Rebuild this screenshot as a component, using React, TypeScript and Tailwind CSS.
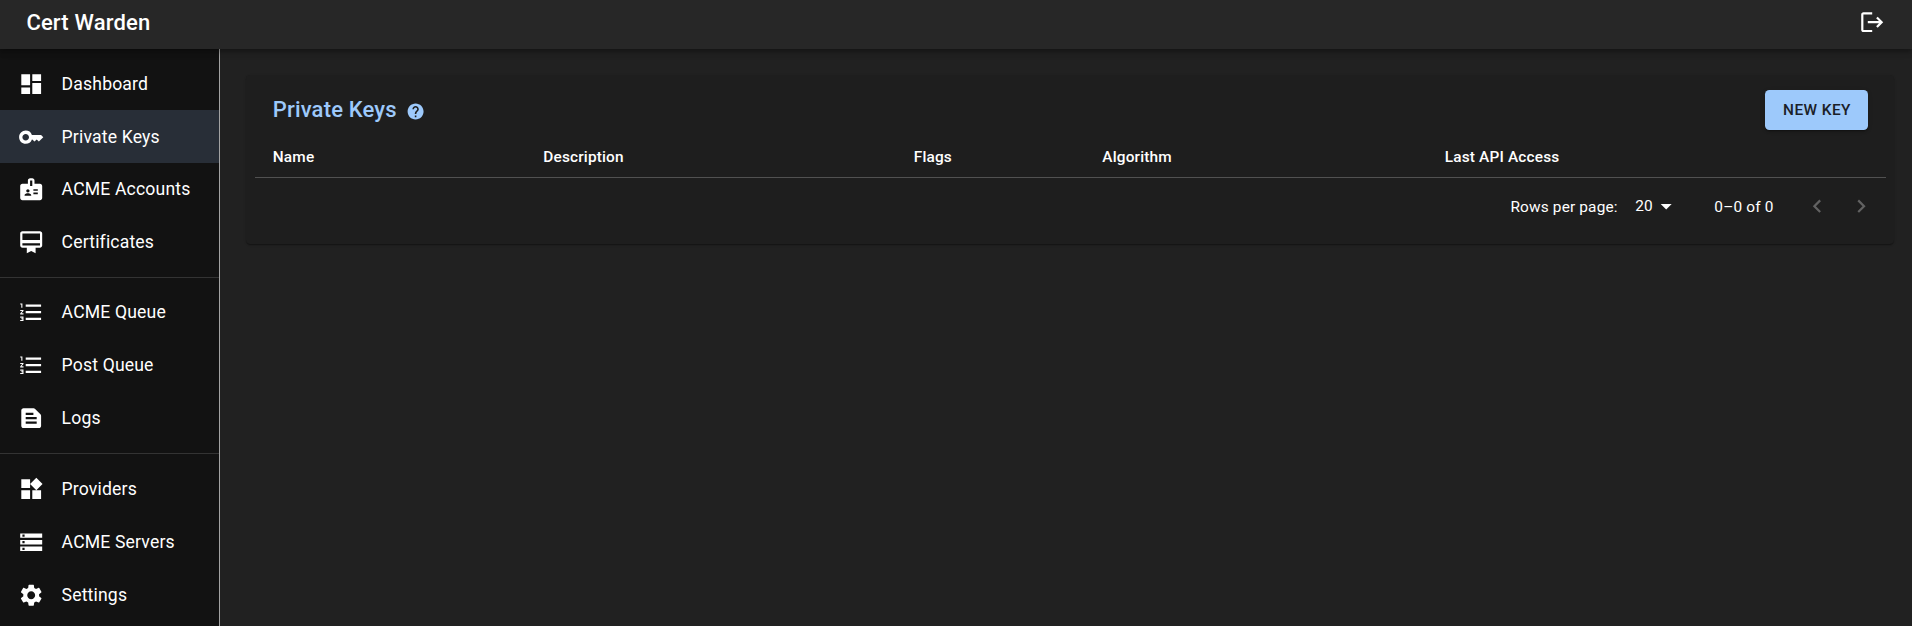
import type { ReactNode } from "react";
import type { IconType } from "react-icons";
import {
  MdArrowDropDown,
  MdBadge,
  MdCardMembership,
  MdChevronLeft,
  MdChevronRight,
  MdDashboard,
  MdFormatListNumbered,
  MdHelp,
  MdKey,
  MdLogout,
  MdSettings,
  MdStorage,
  MdTextSnippet,
  MdWidgets,
} from "react-icons/md";

type Item = { label: string; icon: IconType; active?: boolean };

const groups: { spacing: string; items: Item[] }[] = [
  {
    spacing: "h-[229px] pt-[8.8px] border-b",
    items: [
      { label: "Dashboard", icon: MdDashboard },
      { label: "Private Keys", icon: MdKey, active: true },
      { label: "ACME Accounts", icon: MdBadge },
      { label: "Certificates", icon: MdCardMembership },
    ],
  },
  {
    spacing: "h-[176.4px] pt-[8.3px] border-b",
    items: [
      { label: "ACME Queue", icon: MdFormatListNumbered },
      { label: "Post Queue", icon: MdFormatListNumbered },
      { label: "Logs", icon: MdTextSnippet },
    ],
  },
  {
    spacing: "pt-[8.8px]",
    items: [
      { label: "Providers", icon: MdWidgets },
      { label: "ACME Servers", icon: MdStorage },
      { label: "Settings", icon: MdSettings },
    ],
  },
];

function NavItem({ label, icon: Icon, active }: Item) {
  return (
    <a
      className={`flex h-[52.8px] items-center pl-[17.6px] text-[17.6px] tracking-[0.00938em] ${
        active ? "bg-[#282e37]" : ""
      }`}
    >
      <Icon className="size-[26.4px] shrink-0" />
      <span className="ml-[17.6px] whitespace-nowrap">{label}</span>
    </a>
  );
}

function Sidebar() {
  return (
    <nav className="w-[220px] shrink-0 overflow-hidden border-r border-[#a3a3a3] bg-[#121212]">
      {groups.map(({ spacing, items }, i) => (
        <div key={i} className={`border-[#333333] ${spacing}`}>
          {items.map((item) => (
            <NavItem key={item.label} {...item} />
          ))}
        </div>
      ))}
    </nav>
  );
}

function Th({ className, children }: { className: string; children: ReactNode }) {
  return (
    <th className={`px-[17.6px] pt-[2px] text-left font-medium tracking-[0.01071em] ${className}`}>
      {children}
    </th>
  );
}

function Pagination() {
  return (
    <div className="flex h-[57.2px] items-center justify-end pr-[2.2px] text-[15.4px] tracking-[0.01071em]">
      <span className="pt-[2px]">Rows per page:</span>
      <button className="mr-[35px] ml-[17.6px] flex items-center">
        <span>20</span>
        <MdArrowDropDown className="size-[26.4px]" />
      </button>
      <span className="pt-[2px]">0–0 of 0</span>
      <div className="ml-[22px] flex text-[#626262]">
        <button className="p-[8.8px]">
          <MdChevronLeft className="size-[26.4px]" />
        </button>
        <button className="p-[8.8px]">
          <MdChevronRight className="size-[26.4px]" />
        </button>
      </div>
    </div>
  );
}

export default function App() {
  return (
    <div className="flex h-[626px] flex-col overflow-hidden bg-[#212121] font-[Roboto,sans-serif] text-white">
      <header className="z-10 flex h-[48.8px] shrink-0 items-center justify-between bg-[#272727] pr-[26.4px] pb-1 pl-[26.4px] shadow-[0_2px_4px_-1px_rgba(0,0,0,0.2),0_4px_5px_0_rgba(0,0,0,0.14),0_1px_10px_0_rgba(0,0,0,0.12)]">
        <h1 className="text-[22px] font-medium tracking-[0.0075em]">Cert Warden</h1>
        <button>
          <MdLogout className="size-[26.4px]" />
        </button>
      </header>
      <div className="flex min-h-0 flex-1">
        <Sidebar />
        <main className="flex-1 pt-[26.4px] pr-[17.6px] pl-[26.4px]">
          <section className="rounded-[4.4px] bg-[#1e1e1e] px-[8.8px] pb-[8.8px] shadow-[0_2px_1px_-1px_rgba(0,0,0,0.2),0_1px_1px_0_rgba(0,0,0,0.14),0_1px_3px_0_rgba(0,0,0,0.12)]">
            <div className="flex h-[61px] items-center justify-between px-[17.6px] pt-[9px]">
              <div className="flex items-center pb-[2px] text-[#9dc9fb]">
                <h2 className="text-[22px] font-medium tracking-[0.0075em]">Private Keys</h2>
                <MdHelp className="mt-[4px] ml-[9px] size-[19.2px]" />
              </div>
              <button className="h-10 w-[103px] rounded-[4.4px] bg-[#9dc9fb] pl-px text-[15.4px] font-medium tracking-[0.02857em] text-[#1b2027] shadow-[0_3px_1px_-2px_rgba(0,0,0,0.2),0_2px_2px_0_rgba(0,0,0,0.14),0_1px_5px_0_rgba(0,0,0,0.12)]">
                NEW KEY
              </button>
            </div>
            <table className="w-full table-fixed border-collapse text-[15.4px]">
              <thead>
                <tr className="h-[41px] border-b border-[#515151]">
                  <Th className="w-[270.5px]">Name</Th>
                  <Th className="w-[370.5px]">Description</Th>
                  <Th className="w-[188.5px]">Flags</Th>
                  <Th className="w-[342.5px]">Algorithm</Th>
                  <Th className="">Last API Access</Th>
                </tr>
              </thead>
            </table>
            <Pagination />
          </section>
        </main>
      </div>
    </div>
  );
}
